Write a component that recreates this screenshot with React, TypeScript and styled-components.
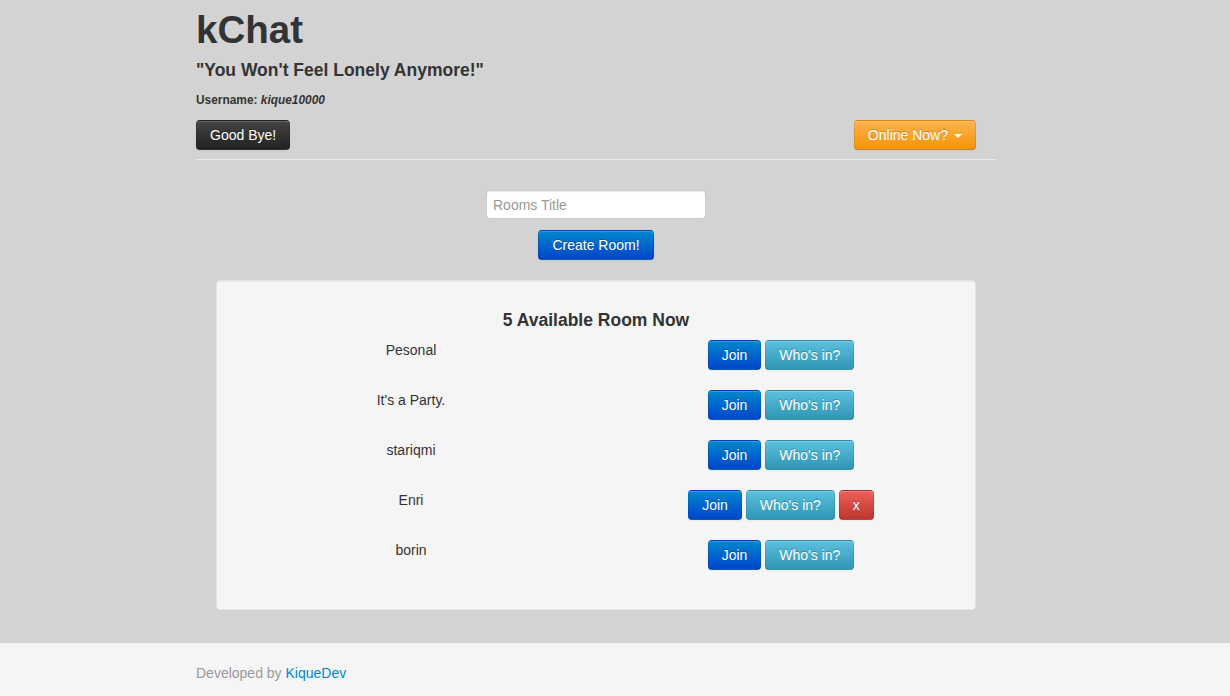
import React from "react";
import styled, { createGlobalStyle, css } from "styled-components";

const GlobalStyle = createGlobalStyle`
  html, body {
    margin: 0;
    padding: 0;
    background: #d3d3d3;
  }
  body {
    font-family: "Liberation Sans", Arial, Helvetica, sans-serif;
    font-size: 14px;
    line-height: 20px;
    color: #333;
  }
  * { box-sizing: border-box; }
`;

const Page = styled.div`
  display: flex;
  flex-direction: column;
`;

const Container = styled.div`
  width: 838px;
  padding-right: 38px;
  margin: 0 auto;
`;

const Title = styled.h1`
  margin: 10px 0;
  font-size: 38.5px;
  line-height: 40px;
  font-weight: bold;
`;

const Slogan = styled.h4`
  margin: 10px 0;
  font-size: 17.5px;
  line-height: 20px;
  font-weight: bold;
`;

const UserLine = styled.h6`
  margin: 10px 0;
  font-size: 11.9px;
  line-height: 20px;
  font-weight: bold;
  em { font-style: italic; }
`;

const Toolbar = styled.div`
  display: flex;
  justify-content: space-between;
  align-items: center;
  padding-right: 20px;
`;

const Rule = styled.hr`
  margin: 9px 0 0;
  border: 0;
  border-top: 1px solid #ececec;
  height: 0;
`;

type Variant = "inverse" | "warning" | "primary" | "info" | "danger";

const gradients: Record<Variant, [string, string]> = {
  inverse: ["#444444", "#222222"],
  warning: ["#fbb450", "#f89406"],
  primary: ["#0088cc", "#0044cc"],
  info: ["#5bc0de", "#2f96b4"],
  danger: ["#ee5f5b", "#bd362f"],
};

const Button = styled.button<{ $variant: Variant }>`
  display: inline-flex;
  align-items: center;
  gap: 6px;
  height: 30px;
  padding: 4px 13px;
  font-family: inherit;
  font-size: 14px;
  line-height: 20px;
  color: #fff;
  text-shadow: 0 -1px 0 rgba(0, 0, 0, 0.25);
  border: 1px solid;
  border-color: rgba(0, 0, 0, 0.1) rgba(0, 0, 0, 0.1) rgba(0, 0, 0, 0.25);
  border-radius: 4px;
  box-shadow: inset 0 1px 0 rgba(255, 255, 255, 0.2), 0 1px 2px rgba(0, 0, 0, 0.05);
  cursor: pointer;
  ${({ $variant }) => css`
    background-color: ${gradients[$variant][1]};
    background-image: linear-gradient(to bottom, ${gradients[$variant][0]}, ${gradients[$variant][1]});
  `}
`;

const Caret = styled.span`
  display: inline-block;
  width: 0;
  height: 0;
  border-top: 4px solid #fff;
  border-left: 4px solid transparent;
  border-right: 4px solid transparent;
  margin-top: 2px;
`;

const CreateForm = styled.div`
  display: flex;
  flex-direction: column;
  align-items: center;
  gap: 11px;
  margin-top: 30px;
`;

const TitleInput = styled.input`
  width: 220px;
  height: 29px;
  padding: 4px 6px;
  font-family: inherit;
  font-size: 14px;
  line-height: 20px;
  color: #555;
  background: #fff;
  border: 1px solid #ccc;
  border-radius: 4px;
  box-shadow: inset 0 1px 1px rgba(0, 0, 0, 0.075);
  outline: none;
  &::placeholder { color: #999; }
`;

const Well = styled.div`
  margin: 20px 20px 0;
  padding: 19px;
  background: #f5f5f5;
  border: 1px solid #e3e3e3;
  border-radius: 4px;
  box-shadow: inset 0 1px 1px rgba(0, 0, 0, 0.05);
`;

const WellTitle = styled.h4`
  margin: 10px 0;
  text-align: center;
  font-size: 17.5px;
  line-height: 20px;
  font-weight: bold;
`;

const RoomList = styled.div`
  display: flex;
  flex-direction: column;
  gap: 20px;
  margin: 0 -10px 20px;
`;

const RoomRow = styled.div`
  display: grid;
  grid-template-columns: 1fr 1fr;
  align-items: start;
`;

const RoomName = styled.div`
  text-align: center;
  line-height: 20px;
`;

const Actions = styled.div`
  display: flex;
  justify-content: center;
  gap: 4px;
`;

const Footer = styled.footer`
  margin-top: 33px;
  background: #f5f5f5;
  padding: 20px 0;
  color: #999;
`;

const Link = styled.a`
  color: #0088cc;
  text-decoration: none;
`;

const rooms = [
  { name: "Pesonal", own: false },
  { name: "It's a Party.", own: false },
  { name: "stariqmi", own: false },
  { name: "Enri", own: true },
  { name: "borin", own: false },
];

export default function App() {
  return (
    <Page>
      <GlobalStyle />
      <Container>
        <Title>kChat</Title>
        <Slogan>"You Won't Feel Lonely Anymore!"</Slogan>
        <UserLine>
          Username: <em>kique10000</em>
        </UserLine>
        <Toolbar>
          <Button $variant="inverse">Good Bye!</Button>
          <Button $variant="warning">
            Online Now? <Caret />
          </Button>
        </Toolbar>
        <Rule />
        <CreateForm>
          <TitleInput placeholder="Rooms Title" />
          <Button $variant="primary">Create Room!</Button>
        </CreateForm>
        <Well>
          <WellTitle>{rooms.length} Available Room Now</WellTitle>
          <RoomList>
            {rooms.map((r) => (
              <RoomRow key={r.name}>
                <RoomName>{r.name}</RoomName>
                <Actions>
                  <Button $variant="primary">Join</Button>
                  <Button $variant="info">Who's in?</Button>
                  {r.own && <Button $variant="danger">x</Button>}
                </Actions>
              </RoomRow>
            ))}
          </RoomList>
        </Well>
      </Container>
      <Footer>
        <Container>
          Developed by <Link href="#">KiqueDev</Link>
        </Container>
      </Footer>
    </Page>
  );
}
